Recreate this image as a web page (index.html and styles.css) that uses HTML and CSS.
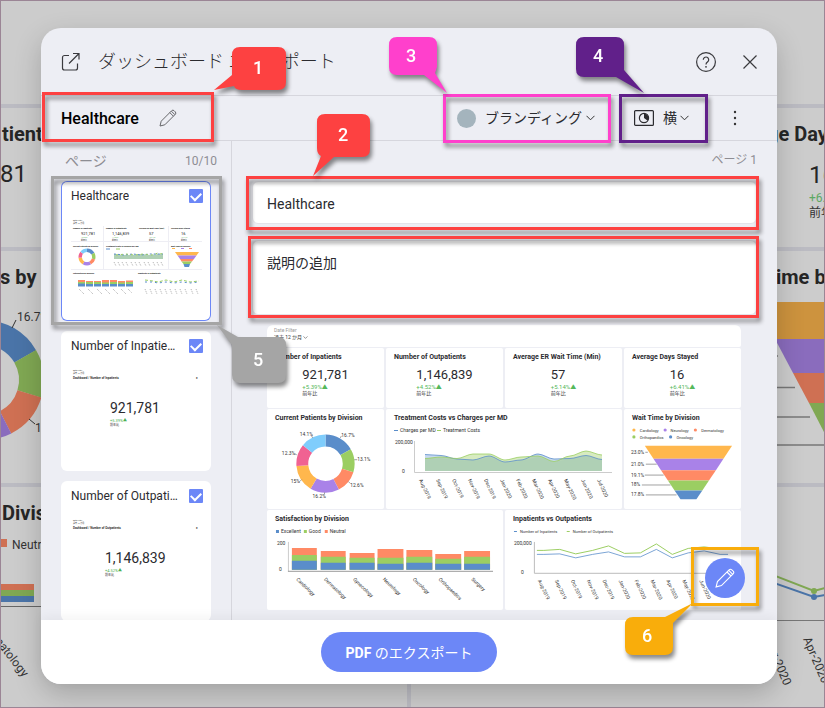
FILE: index.html
```html
<!DOCTYPE html>
<html lang="ja">
<head>
<meta charset="utf-8">
<meta name="viewport" content="width=device-width, initial-scale=1">
<title>ダッシュボード エクスポート</title>
<link rel="stylesheet" href="styles.css">
</head>
<body>
<svg class="backdrop" viewBox="0 0 825 708" preserveAspectRatio="xMidYMid slice" aria-hidden="true">
  <g fill="#bbbbc2">
    <rect y="104" width="825" height="4"/><rect y="247" width="825" height="4"/><rect y="483" width="825" height="4"/><rect x="407" y="487" width="4" height="221"/>
  </g>
  <g class="bg-title">
    <text x="2" y="141">tients</text><text x="0" y="284">s by</text><text x="2" y="520">Division</text>
    <text x="767" y="141">ge Day</text><text x="776" y="284">ime by</text>
  </g>
  <g class="bg-number"><text x="0" y="182">81</text><text x="809" y="183">16</text></g>
  <g fill="none" stroke-width="25">
    <circle cx="-16" cy="380" r="47.5" stroke="#4a74a8" pathLength="100" stroke-dasharray="16.7 100" transform="rotate(-90 -16 380)"/>
    <circle cx="-16" cy="380" r="47.5" stroke="#80a853" pathLength="100" stroke-dasharray="13.1 100" transform="rotate(-30 -16 380)"/>
    <circle cx="-16" cy="380" r="47.5" stroke="#cf7053" pathLength="100" stroke-dasharray="12.8 100" transform="rotate(17 -16 380)"/>
    <circle cx="-16" cy="380" r="47.5" stroke="#8a6cbd" pathLength="100" stroke-dasharray="16.2 100" transform="rotate(63 -16 380)"/>
  </g>
  <path d="M12 328l4-8M29 419l6 5" stroke="#333" fill="none"/>
  <g class="bg-label"><text x="17" y="321">16.7%</text><text x="35" y="432">12.6%</text><text x="12" y="549">Neutral</text>
    <text transform="translate(-19 624) rotate(52)">Dermatology</text>
    <text transform="translate(764 639) rotate(67)">Mar-2020</text><text transform="translate(803 639) rotate(67)">Apr-2020</text></g>
  <path fill="#cf7053" d="M0 539h7v8H0zM0 584h34v6H0z"/><path fill="#80a853" d="M0 590h34v6H0z"/><path fill="#4a74a8" d="M0 596h34v6H0z"/>
  <path d="M0 606.5h41" stroke="#666"/>
  <text class="bg-delta" x="809" y="202">+6.41%</text><text class="bg-label" x="809" y="217">前年比</text>
  <path fill="#cd933e" d="M757 302h68v37h-50z"/><path fill="#8a6cbd" d="M775 339h50v34h-32z"/><path fill="#cf7053" d="M793 373h32v30h-16z"/><path fill="#80a853" d="M809 403h16v31z"/>
  <path d="M770 356h8M770 387.500h25M770 417h40M770 445h55" stroke="#777" stroke-width="1.500"/>
  <path d="M760 570l54 21 11-3" stroke="#80a853" fill="none" stroke-width="2"/><path d="M760 578l54 19 11-2" stroke="#4a74a8" fill="none" stroke-width="2"/>
  <circle cx="814" cy="591" r="3" fill="#80a853"/><circle cx="814" cy="597" r="3" fill="#4a74a8"/>
  <path d="M770 620.500h55" stroke="#777"/>
</svg>

<div class="modal" role="dialog" aria-labelledby="dialog-title">
  <header class="modal-header">
    <svg class="icon-export" viewBox="0 0 20 20" aria-hidden="true"><path d="M8 3.500H3.500a2 2 0 0 0-2 2V16a2 2 0 0 0 2 2h11a2 2 0 0 0 2-2v-4.500M8 11.500L17.500 2M12 1.500h6v6"/></svg>
    <h1 id="dialog-title">ダッシュボード エクスポート</h1>
    <button class="icon-button" type="button" aria-label="ヘルプ"><svg class="icon-help" viewBox="0 0 20 20"><circle cx="10" cy="10" r="9.400"/><path d="M7.300 7.800a2.700 2.700 0 1 1 4.400 2c-1 .8-1.700 1.200-1.700 2.600"/><circle class="dot" cx="10" cy="14.800" r=".9"/></svg></button>
    <button class="icon-button" type="button" aria-label="閉じる"><svg class="icon-close" viewBox="0 0 14 14"><path d="M.5.5l13 13M13.500.5l-13 13"/></svg></button>
  </header>

  <div class="toolbar">
    <div class="doc-name">
      <h2>Healthcare</h2>
      <button class="icon-button" type="button" aria-label="名前の編集"><svg class="icon-pencil" viewBox="0 0 18 18"><path d="M1 17l1.200-4.800L12.700 1.700a1.700 1.700 0 0 1 2.400 0l1.200 1.200a1.700 1.700 0 0 1 0 2.400L5.800 15.800zM10.800 3.600l3.600 3.600M12.400 2.200l3.500 3.500"/></svg></button>
      <span class="frame frame-name"></span>
      <svg class="bubble bubble-1" viewBox="0 0 72 44"><path d="M26 0h38q8 0 8 8v27q0 8-8 8H28q-7 0-8-4L0 43l18-15V8q0-8 8-8z"/><text x="44" y="27">1</text></svg>
    </div>
    <label class="picker picker-branding">
      <span class="swatch"></span>
      <select aria-label="ブランディング"><option>ブランディング</option></select>
      <svg class="chevron" viewBox="0 0 9 6"><path d="M.5.8l4 4 4-4"/></svg>
      <span class="frame frame-branding"></span>
      <svg class="bubble bubble-3" viewBox="0 0 58 56"><path d="M8 0h32q8 0 8 8v22l-2 6 12 20-23-18H8q-8 0-8-8V8q0-8 8-8z"/><text x="22" y="25">3</text></svg>
    </label>
    <label class="picker picker-layout">
      <svg class="icon-layout" viewBox="0 0 20 16"><rect x=".6" y=".6" width="18.800" height="14.800" rx="1"/><circle cx="10" cy="8" r="4.600"/><path class="solid" d="M10 8V3.400A4.600 4.600 0 0 1 13.700 10.700z"/></svg>
      <select aria-label="向き"><option>横</option></select>
      <svg class="chevron" viewBox="0 0 9 6"><path d="M.5.8l4 4 4-4"/></svg>
      <span class="frame frame-layout"></span>
      <svg class="bubble bubble-4" viewBox="0 0 68 56"><path d="M8 0h32q8 0 8 8v25l20 23-28-16H8q-8 0-8-8V8q0-8 8-8z"/><text x="22" y="25">4</text></svg>
    </label>
    <button class="icon-button kebab" type="button" aria-label="その他"><svg viewBox="0 0 4 16"><circle cx="2" cy="2" r="1.200"/><circle cx="2" cy="8" r="1.200"/><circle cx="2" cy="14" r="1.200"/></svg></button>
  </div>

  <div class="modal-body">
    <aside class="sidebar">
      <div class="sidebar-head"><span>ページ</span><span>10/10</span></div>
      <div class="thumb-list">
        <section class="thumb selected">
          <div class="thumb-head"><label for="page-1">Healthcare</label><input id="page-1" type="checkbox" checked></div>
          <svg viewBox="0 0 150 110" aria-hidden="true">
            <g class="micro"><text x="12" y="10">Date Filter</text><text x="12" y="12.500">過去 12 か月</text></g>
            <g class="micro strong"><text x="12" y="18">Number of Inpatients</text><text x="45" y="18">Number of Outpatients</text><text x="78" y="18">Average ER Wait Time (Min)</text><text x="110" y="18">Average Days Stayed</text>
              <text x="12" y="35.500">Current Patients by Division</text><text x="45" y="35.500">Treatment Costs vs Charges per MD</text><text x="110" y="35.500">Wait Time by Division</text><text x="12" y="63">Satisfaction by Division</text><text x="77" y="63">Inpatients vs Outpatients</text></g>
            <g class="micro-number"><text x="20" y="24">921,781</text><text x="51" y="24">1,146,839</text><text x="88" y="24">57</text><text x="120" y="24">16</text></g>
            <g class="micro green"><text x="20" y="27">+5.39%</text><text x="51" y="27">+4.52%</text><text x="88" y="27">+5.14%</text><text x="120" y="27">+6.41%</text></g>
            <g class="micro"><text x="20" y="29.500">前年比</text><text x="51" y="29.500">前年比</text><text x="88" y="29.500">前年比</text><text x="120" y="29.500">前年比</text></g>
            <path d="M10 30.500h131M10 58.500h131M42.500 15v43M107.500 15v43" stroke="#eeeef4" fill="none"/>
            <g fill="none" stroke-width="3.400" transform="rotate(-90 26 46)">
              <circle cx="26" cy="46" r="6.800" stroke="#5a8dca" pathLength="100" stroke-dasharray="16.7 100"/><circle cx="26" cy="46" r="6.800" stroke="#9bce62" pathLength="100" stroke-dasharray="13.1 100" stroke-dashoffset="-16.7"/><circle cx="26" cy="46" r="6.800" stroke="#ff8a65" pathLength="100" stroke-dasharray="12.6 100" stroke-dashoffset="-29.8"/><circle cx="26" cy="46" r="6.800" stroke="#a982e8" pathLength="100" stroke-dasharray="16.2 100" stroke-dashoffset="-42.4"/><circle cx="26" cy="46" r="6.800" stroke="#ffb74d" pathLength="100" stroke-dasharray="15 100" stroke-dashoffset="-58.6"/><circle cx="26" cy="46" r="6.800" stroke="#f06292" pathLength="100" stroke-dasharray="12.3 100" stroke-dashoffset="-73.6"/><circle cx="26" cy="46" r="6.800" stroke="#7fcdfc" pathLength="100" stroke-dasharray="14.1 100" stroke-dashoffset="-85.9"/>
            </g>
            <path fill="#afd0b5" d="M53 48v-5l10 1 9 0 8-1 9 1 8-1 5 0v5z"/><path d="M53 43l10 1 9-1 8 1 9-1 8 0 5 0" stroke="#5a8dca" stroke-dasharray="2 2" fill="none"/><path d="M55 44l10-1 9 1 8-1 9 1 6-2 5 1" stroke="#9bce62" stroke-dasharray="2 3" fill="none"/>
            <path d="M45 38h4" stroke="#5a8dca"/><path d="M55 38h4" stroke="#9bce62"/>
            <path class="ticks" d="M53 51l2 4M57 51l2 4M61 51l2 4M65 51l2 4M70 51l2 4M74 51l2 4M78 51l2 4M83 51l2 4M87 51l2 4M92 51l2 4M96 51l2 4M100 51l2 4M18 78l5 5M27 78l5 5M36 78l5 5M44 78l5 5M52 78l5 5M60 78l5 5M67 78l4 4M84 78l2 5M89 78l2 5M94 78l2 5M99 78l2 5M104 78l2 5M109 78l2 5M114 78l2 5M119 78l2 5M124 78l2 5M130 78l2 5M135 78l2 5"/>
            <path fill="#ffb74d" d="M114 41h24l-2.500 3.500h-19z"/><path fill="#a982e8" d="M116.500 44.500h19l-2.500 3.500h-14z"/><path fill="#ff8a65" d="M119 48h14l-2 2.500h-10.500z"/><path fill="#9bce62" d="M120.500 50.500h10.500l-2 2.500h-6.500z"/><path fill="#5a8dca" d="M122.500 53h6.500l-1 3h-4.500z"/>
            <path d="M111 37.500h3" stroke="#ffb74d"/><path d="M120 37.500h3" stroke="#a982e8"/><path d="M128 37.500h3" stroke="#ff8a65"/>
            <path fill="#ff8a65" d="M17 69h7v3h-7zM25 70h7v2h-7zM33 70h7v2h-7zM41 69h7v3h-7zM49 69h7v3h-7zM57 70h7v2h-7zM65 69.500h7v2.500h-7z"/><path fill="#9bce62" d="M17 71h7v2h-7zM25 71h7v2h-7zM33 71h7v2h-7zM41 71.500h7v2h-7zM49 71h7v2h-7zM57 71.500h7v2h-7zM65 71h7v2h-7z"/><path fill="#5a8dca" d="M17 72.500h7v3h-7zM25 73h7v2.500h-7zM33 73h7v2.500h-7zM41 73h7v2.500h-7zM49 73h7v2.500h-7zM57 73h7v2.500h-7zM65 73h7v2.500h-7z"/>
            <path d="M84 69l8 1 5 1 8-2 8 2 8-2 8 2 9-1" stroke="#9bce62" stroke-dasharray="3 2" fill="none"/><path d="M84 71l8 0 5 1 8-1 8 1 8-1 8 1 9-1" stroke="#5a8dca" stroke-dasharray="2 3" fill="none"/>
          </svg>
          <span class="frame frame-thumb"></span>
          <svg class="bubble bubble-5" viewBox="0 0 70 58"><path d="M1 0l21 12h40q8 0 8 8v30q0 8-8 8H24q-8 0-8-8V20z"/><text x="42" y="41">5</text></svg>
        </section>
        <section class="thumb">
          <div class="thumb-head"><label for="page-2">Number of Inpatients</label><input id="page-2" type="checkbox" checked></div>
          <svg viewBox="0 0 150 110" aria-hidden="true">
            <g class="micro"><text x="12" y="10">Date Filter</text><text x="12" y="12.500">過去 12 か月</text></g>
            <text class="micro-title" x="12" y="18">Dashboard / Number of Inpatients</text><text class="micro-title" x="135" y="18">x</text>
            <text class="thumb-number" x="49" y="52">921,781</text><text class="thumb-delta" x="49" y="61">+5.39%▲</text><text class="thumb-note" x="49" y="65">前年比</text>
          </svg>
        </section>
        <section class="thumb">
          <div class="thumb-head"><label for="page-3">Number of Outpatients</label><input id="page-3" type="checkbox" checked></div>
          <svg viewBox="0 0 150 110" aria-hidden="true">
            <g class="micro"><text x="12" y="10">Date Filter</text><text x="12" y="12.500">過去 12 か月</text></g>
            <text class="micro-title" x="12" y="18">Dashboard / Number of Outpatients</text><text class="micro-title" x="135" y="18">x</text>
            <text class="thumb-number" x="44" y="52">1,146,839</text><text class="thumb-delta" x="44" y="61">+4.52%▲</text><text class="thumb-note" x="44" y="65">前年比</text>
          </svg>
        </section>
      </div>
    </aside>

    <main class="page">
      <div class="page-number">ページ 1</div>
      <div class="field field-title">
        <input type="text" value="Healthcare" aria-label="タイトル">
        <span class="frame frame-title"></span>
        <svg class="bubble bubble-2" viewBox="0 0 58 62"><path d="M11 0h38q8 0 8 8v27q0 8-8 8h-28L0 62l8-20q-4-2-4-8V8q0-8 8-8z"/><text x="30" y="27">2</text></svg>
      </div>
      <div class="field field-notes">
        <textarea aria-label="説明">説明の追加</textarea>
        <span class="frame frame-notes"></span>
      </div>

      <div class="dashboard">
        <section class="card filter"><span>Date Filter</span><strong>過去 12 か月 <svg viewBox="0 0 9 6"><path d="M.5.8l4 4 4-4"/></svg></strong></section>
        <section class="card kpi"><h3>Number of Inpatients</h3><div><b>921,781</b><em>+5.39%▲</em><span>前年比</span></div></section>
        <section class="card kpi"><h3>Number of Outpatients</h3><div><b>1,146,839</b><em>+4.52%▲</em><span>前年比</span></div></section>
        <section class="card kpi"><h3>Average ER Wait Time (Min)</h3><div><b>57</b><em>+5.14%▲</em><span>前年比</span></div></section>
        <section class="card kpi"><h3>Average Days Stayed</h3><div><b>16</b><em>+6.41%▲</em><span>前年比</span></div></section>

        <section class="card"><h3>Current Patients by Division</h3>
          <svg viewBox="0 18 118 82">
            <g fill="none" stroke-width="12" transform="rotate(-90 59 55)">
              <circle cx="59" cy="55" r="23.400" stroke="#5a8dca" pathLength="100" stroke-dasharray="16.7 100"/><circle cx="59" cy="55" r="23.400" stroke="#9bce62" pathLength="100" stroke-dasharray="13.1 100" stroke-dashoffset="-16.7"/><circle cx="59" cy="55" r="23.400" stroke="#ff8a65" pathLength="100" stroke-dasharray="12.6 100" stroke-dashoffset="-29.8"/><circle cx="59" cy="55" r="23.400" stroke="#a982e8" pathLength="100" stroke-dasharray="16.2 100" stroke-dashoffset="-42.4"/><circle cx="59" cy="55" r="23.400" stroke="#ffb74d" pathLength="100" stroke-dasharray="15 100" stroke-dashoffset="-58.6"/><circle cx="59" cy="55" r="23.400" stroke="#f06292" pathLength="100" stroke-dasharray="12.3 100" stroke-dashoffset="-73.6"/><circle cx="59" cy="55" r="23.400" stroke="#7fcdfc" pathLength="100" stroke-dasharray="14.1 100" stroke-dashoffset="-85.9"/>
            </g>
            <path class="leader" d="M74 29l1-2M88 51h3M82 73l2 2M58 84v2M35 71l-2 2M30 46l-2-1M46 29l-1-2"/>
            <g class="tiny"><text x="75" y="28">16.7%</text><text x="91" y="52">13.1%</text><text x="84" y="79">12.6%</text><text x="46" y="90">16.2%</text><text x="24" y="75">15%</text><text x="15" y="46">12.3%</text><text x="33" y="27">14.1%</text></g>
          </svg>
        </section>
        <section class="card wide-mid"><h3>Treatment Costs vs Charges per MD</h3>
          <svg viewBox="0 18 236 82">
            <path d="M8 21.500h4" stroke="#5a8dca"/><path d="M51 21.500h4" stroke="#9bce62"/>
            <g class="tiny"><text x="14" y="23">Charges per MD</text><text x="57" y="23">Treatment Costs</text><text x="9" y="35">200,000</text><text x="16" y="64">0</text></g>
            <path d="M28.500 32v31.500H226" stroke="#ccc" fill="none"/>
            <path fill="#c6d9ef" d="M39 62V45.500S50 46.500 55 46.500 66 50 71 50 82 51 87 51 98 47 103 47 114 53 119 53 130 51 135 51 147 45 152 45 163 50 168 50 179 49.500 184 49.500 195 46.500 200 46.500 211 50.500 216 50.500V62z"/>
            <path fill="#9bce62" fill-opacity=".4" d="M39 62V49.500S50 48 55 48 66 49.500 71 49.500 82 45 87 45 98 45 103 45 114 51 119 51 130 48 135 48 147 47 152 47 163 52.500 168 52.500 179 47 184 47 195 42 200 42 211 46 216 46V62z"/>
            <path fill="#afd0b5" d="M39 62V50L55 49l16 2 16 1 16-4 16 6 16-2 17-4 16 5 16-3 16-3 16 4v11z"/>
            <path fill="none" stroke="#5a8dca" stroke-width=".8" d="M39 45.500C44 45.500 50 46.500 55 46.500S66 50 71 50 82 51 87 51 98 47 103 47 114 53 119 53 130 51 135 51 147 45 152 45 163 50 168 50 179 49.500 184 49.500 195 46.500 200 46.500 211 50.500 216 50.500"/>
            <path fill="none" stroke="#9bce62" stroke-width=".8" d="M39 49.500C44 49.500 50 48 55 48S66 49.500 71 49.500 82 45 87 45 98 45 103 45 114 51 119 51 130 48 135 48 147 47 152 47 163 52.500 168 52.500 179 47 184 47 195 42 200 42 211 46 216 46"/>
            <g class="tiny"><text transform="translate(33 71) rotate(65)">Aug-2019</text><text transform="translate(50 71) rotate(65)">Sep-2019</text><text transform="translate(66 71) rotate(65)">Oct-2019</text><text transform="translate(82 71) rotate(65)">Nov-2019</text><text transform="translate(98 71) rotate(65)">Dec-2019</text><text transform="translate(114 71) rotate(65)">Jan-2020</text><text transform="translate(130 71) rotate(65)">Feb-2020</text><text transform="translate(146 71) rotate(65)">Mar-2020</text><text transform="translate(162 71) rotate(65)">Apr-2020</text><text transform="translate(178 71) rotate(65)">May-2020</text><text transform="translate(195 71) rotate(65)">Jun-2020</text><text transform="translate(211 71) rotate(65)">Jul-2020</text></g>
          </svg>
        </section>
        <section class="card"><h3>Wait Time by Division</h3>
          <svg viewBox="0 18 118 82">
            <circle cx="10" cy="21" r="1.600" fill="#ffb74d"/><circle cx="41.500" cy="21" r="1.600" fill="#a982e8"/><circle cx="72" cy="21" r="1.600" fill="#ff8a65"/><circle cx="10" cy="28" r="1.600" fill="#9bce62"/><circle cx="47" cy="28" r="1.600" fill="#5a8dca"/>
            <g class="tiny legend"><text x="16" y="23">Cardiology</text><text x="47" y="23">Neurology</text><text x="78" y="23">Dermatology</text><text x="16" y="30">Orthopaedics</text><text x="53" y="30">Oncology</text></g>
            <g class="tiny"><text x="7" y="45">23.0%</text><text x="7" y="57">21.0%</text><text x="7" y="68">19.1%</text><text x="7" y="78">18%</text><text x="7" y="88">17.8%</text></g>
            <path class="leader" d="M21.500 43.500H24M22 55.500h11M21 66.500h19M18 76.500h29M22 86.500h31"/>
            <path fill="#ffb74d" d="M21 37h88l-8.700 13H29.700z"/><path fill="#a982e8" d="M29.700 50h70.600l-7.600 11.500H37.300z"/><path fill="#ff8a65" d="M37.300 61.500h55.400l-7 10.500H44.300z"/><path fill="#9bce62" d="M44.300 72h41.400L79 82H51z"/><path fill="#5a8dca" d="M51 82h28l-6 9H57z"/>
          </svg>
        </section>

        <section class="card half"><h3>Satisfaction by Division</h3>
          <svg viewBox="0 18 237 82">
            <path fill="#5a8dca" d="M9 20h3v3H9z"/><path fill="#9bce62" d="M37 20h3v3h-3z"/><path fill="#ff8a65" d="M58 20h3v3h-3z"/>
            <g class="tiny"><text x="14" y="23">Excellent</text><text x="42" y="23">Good</text><text x="63" y="23">Neutral</text><text x="10" y="35">200</text><text x="12" y="61">0</text></g>
            <path d="M21.500 32v29.500" stroke="#ccc"/><path d="M21 61.500h206" stroke="#999"/>
            <path fill="#ff8a65" d="M25 38h25v22H25zM54 41h25v19H54zM83 43h25v17H83zM111 39h26v21h-26zM140 40h26v20h-26zM169 44h26v16h-26zM198 41h26v19h-26z"/>
            <path fill="#9bce62" d="M25 45h25v15H25zM54 47h25v13H54zM83 48h25v12H83zM111 48h26v12h-26zM140 47h26v13h-26zM169 49h26v11h-26zM198 47h26v13h-26z"/>
            <path fill="#5a8dca" d="M25 51h25v9H25zM54 53h25v7H54zM83 53h25v7H83zM111 54h26v6h-26zM140 53h26v7h-26zM169 54h26v6h-26zM198 54h26v6h-26z"/>
            <g class="tiny"><text transform="translate(29 70) rotate(44)">Cardiology</text><text transform="translate(57 70) rotate(44)">Dermatology</text><text transform="translate(86 70) rotate(44)">Gynecology</text><text transform="translate(116 70) rotate(44)">Neurology</text><text transform="translate(146 70) rotate(44)">Oncology</text><text transform="translate(172 70) rotate(44)">Orthopaedics</text><text transform="translate(205 70) rotate(44)">Surgery</text></g>
          </svg>
        </section>
        <section class="card half"><h3>Inpatients vs Outpatients</h3>
          <svg viewBox="0 18 237 82">
            <path d="M9 21.500h3" stroke="#5a8dca"/><path d="M62 21.500h3" stroke="#9bce62"/>
            <g class="tiny legend"><text x="15" y="23">Number of Inpatients</text><text x="68" y="23">Number of Outpatients</text></g>
            <g class="tiny"><text x="9" y="35">200,000</text><text x="16" y="64">0</text></g>
            <path d="M29.500 32v31.500H226" stroke="#bbb" fill="none"/>
            <path fill="none" stroke="#9bce62" d="M32 40.500h7l16-1 16 4.500 17-3.500 16-4.500 16 7.500 16-.5 16-9 16 10.500 16-6 16-1.500 16 2h8"/>
            <path fill="none" stroke="#5a8dca" stroke-width=".8" d="M32 44.500h7l16-.5 16 4 17-3.500 16-2.500 16 5h16l16-7.500 16 8.500 16-5 16-2 16 3.500h8"/>
            <g class="tiny"><text transform="translate(33 71) rotate(65)">Aug-2019</text><text transform="translate(50 71) rotate(65)">Sep-2019</text><text transform="translate(66 71) rotate(65)">Oct-2019</text><text transform="translate(82 71) rotate(65)">Nov-2019</text><text transform="translate(98 71) rotate(65)">Dec-2019</text><text transform="translate(114 71) rotate(65)">Jan-2020</text><text transform="translate(130 71) rotate(65)">Feb-2020</text><text transform="translate(146 71) rotate(65)">Mar-2020</text><text transform="translate(162 71) rotate(65)">Apr-2020</text><text transform="translate(178 71) rotate(65)">May-2020</text><text transform="translate(195 71) rotate(65)">Jun-2020</text></g>
          </svg>
        </section>
      </div>

      <div class="edit-spot">
        <button class="fab" type="button" aria-label="編集"><svg class="icon-pencil" viewBox="0 0 18 18"><path d="M1 17l1.200-4.800L12.700 1.700a1.700 1.700 0 0 1 2.400 0l1.200 1.200a1.700 1.700 0 0 1 0 2.400L5.800 15.800zM10.800 3.600l3.600 3.600M12.400 2.200l3.500 3.500"/></svg></button>
        <span class="frame frame-edit"></span>
        <svg class="bubble bubble-6" viewBox="0 0 68 52"><path d="M68 0L48 20v24q0 8-8 8H8q-8 0-8-8V22q0-8 8-8h32z"/><text x="22" y="39">6</text></svg>
      </div>
    </main>
  </div>

  <footer class="modal-footer"><button class="primary" type="button"><b>PDF</b> のエクスポート</button></footer>
</div>
</body>
</html>
```
FILE: styles.css
```css
* { box-sizing: border-box; }

:root {
  --red: #fd4141;
  --pink: #ff40cc;
  --purple: #61208a;
  --gray: #a5a5a5;
  --amber: #f9ad0b;
  --blue: #6c87f7;
  --line: #d6d6dd;
  --surface: #edeef4;
}

body {
  margin: 0;
  height: 100vh;
  overflow: hidden;
  position: relative;
  display: flex;
  padding: 28px 48px 24px 41px;
  background: #ccc;
  color: #2b2b2f;
  font-family: Roboto, "Noto Sans CJK JP", sans-serif;
}
body::after {
  content: "";
  position: absolute;
  inset: 0;
  border: 1px solid #9b8595;
}

button, input, textarea, select { font: inherit; color: inherit; }
h1, h2, h3 { margin: 0; }

.backdrop { position: absolute; inset: 0; width: 100%; height: 100%; }
.bg-title { font-size: 20px; font-weight: 700; fill: #262626; }
.bg-number { font-size: 24px; fill: #262626; }
.bg-label { font-size: 12px; fill: #333; }
.bg-delta { font-size: 12px; fill: #5da864; }

.modal {
  position: relative;
  z-index: 1;
  flex: 1;
  min-width: 0;
  display: flex;
  flex-direction: column;
  border-radius: 20px;
  background: var(--surface);
  box-shadow: 0 10px 28px rgba(0, 0, 0, .2);
}

.icon-button { display: flex; padding: 0; border: 0; background: none; }
.icon-button svg, .icon-export { fill: none; stroke: #3a3a3e; stroke-width: 1.2; }

.modal-header {
  display: flex;
  align-items: center;
  gap: 27px;
  height: 68px;
  padding: 0 20px;
  border-bottom: 1px solid var(--line);
}
.modal-header h1 {
  flex: 1;
  margin-left: -10px;
  font-size: 18px;
  font-weight: 300;
  line-height: 28px;
}
.icon-export { width: 20px; height: 20px; }
.icon-help { width: 20px; height: 20px; }
.icon-help .dot { fill: #3a3a3e; stroke: none; }
.icon-close { width: 14px; height: 14px; }

.toolbar {
  display: flex;
  align-items: stretch;
  gap: 8px;
  height: 45px;
  padding-right: 40px;
  border-bottom: 1px solid var(--line);
}
.doc-name {
  position: relative;
  display: flex;
  align-items: center;
  gap: 20px;
  width: 173px;
  margin-right: auto;
  padding-left: 20px;
}
.doc-name h2 { color: #000; font-size: 16px; font-weight: 500; }
.icon-pencil { width: 18px; height: 18px; }
.doc-name .icon-pencil { stroke: #66666a; stroke-width: 1; }
.picker { position: relative; display: flex; align-items: center; font-size: 14px; }
.picker select { appearance: none; padding: 0; border: 0; background: none; line-height: 20px; }
.picker-branding { padding: 0 16px 0 14px; }
.picker-layout { padding: 0 19px 0 15px; }
.swatch { width: 19px; height: 19px; margin-right: 9px; border-radius: 50%; background: #a4b4bd; }
.chevron { width: 9px; height: 6px; margin-left: 3px; fill: none; stroke: #333; }
.icon-layout { width: 20px; height: 16px; margin-right: 9px; fill: none; stroke: #2b2b2f; stroke-width: 1.2; }
.icon-layout .solid { fill: #2b2b2f; stroke: none; }
.kebab { align-items: center; width: 21px; justify-content: flex-end; }
.kebab svg { width: 4px; height: 16px; fill: #333; stroke: none; }

.modal-body { flex: 1; min-height: 0; display: flex; }
.sidebar { width: 191px; border-right: 1px solid var(--line); }
.sidebar-head {
  display: flex;
  justify-content: space-between;
  padding: 10px 14px 10px 24px;
  color: #8d8d93;
  font-size: 14px;
  line-height: 20px;
}
.sidebar-head span:last-child { font-size: 12px; }
.thumb-list { display: flex; flex-direction: column; gap: 10px; padding: 0 20px; }
.thumb { position: relative; height: 140px; border-radius: 6px; background: #fff; }
.thumb.selected { box-shadow: inset 0 0 0 1px var(--blue); }
.thumb > svg:not(.bubble) { display: block; width: 100%; }
.thumb-head {
  display: flex;
  align-items: center;
  justify-content: space-between;
  gap: 8px;
  height: 30px;
  padding: 0 8px 0 10px;
  font-size: 12px;
}
.thumb-head label { overflow: hidden; max-width: 108px; text-overflow: ellipsis; white-space: nowrap; }
.thumb-head input {
  appearance: none;
  display: grid;
  place-items: center;
  flex: none;
  width: 14px;
  height: 14px;
  margin: 0;
  border-radius: 1px;
  background: var(--blue);
}
.thumb-head input:checked::after {
  content: "";
  width: 8px;
  height: 5px;
  margin-bottom: 2px;
  border: solid #fff;
  border-width: 0 0 2px 2px;
  transform: rotate(-45deg);
}
.micro { font-size: 2px; fill: #333; }
.strong { font-weight: 700; fill: #000; }
.green { fill: #5cb860; }
.micro-number { font-size: 4px; fill: #222; }
.micro-title { font-size: 3px; font-weight: 700; fill: #333; }
.ticks { fill: none; stroke: #777; stroke-width: .6; stroke-dasharray: 1 1; }
.thumb-number { font-size: 14px; fill: #2b2b2f; }
.thumb-delta { font-size: 4px; fill: #4cb050; }
.thumb-note { font-size: 3px; fill: #222; }

.page { position: relative; flex: 1; min-width: 0; padding: 0 20px; }
.page-number { padding: 9px 0 11px; color: #8d8d93; font-size: 12px; line-height: 20px; text-align: right; }
.field { position: relative; }
.field input, .field textarea {
  display: block;
  width: 100%;
  border: 1px solid #e4e4ea;
  border-radius: 6px;
  background: #fff;
  padding: 0 14px;
  font-size: 14px;
  resize: none;
  outline: 0;
}
.field input { height: 43px; padding-top: 3px; }
.field textarea { height: 75px; padding-top: 12px; line-height: 20px; }
.field-title { margin-bottom: 16px; }
.field-notes { margin-bottom: 10px; }

.dashboard {
  display: grid;
  grid-template-columns: repeat(4, minmax(0, 1fr));
  gap: 1px 2px;
  margin: 0 16px 0 15px;
}
.card { overflow: hidden; border-radius: 2px; background: #fff; }
.card h3 { padding-left: 8px; font-size: 7px; font-weight: 700; line-height: 18px; white-space: nowrap; }
.card > svg { display: block; width: 100%; }
.wide-mid, .half { grid-column: span 2; }
.filter {
  grid-column: 1 / -1;
  display: flex;
  flex-direction: column;
  height: 22px;
  padding: 2px 7px;
  border-radius: 6px 6px 2px 2px;
  color: #999;
  font-size: 5px;
  line-height: 7px;
}
.filter strong { color: #333; font-weight: 400; }
.filter svg { width: 5px; height: 3px; fill: none; stroke: #333; }
.kpi { height: 60px; }
.kpi div { display: flex; flex-direction: column; width: max-content; margin: 0 auto; font-size: 5px; line-height: 7px; }
.kpi b { font-size: 13px; font-weight: 400; line-height: 17px; }
.kpi em { color: #55b85a; font-size: 6px; font-style: normal; }
.tiny { font-size: 5px; fill: #333; }
.legend { font-size: 4px; }
.leader { fill: none; stroke: #777; stroke-width: .7; }

.edit-spot { position: absolute; right: 32px; bottom: 22px; }
.fab {
  display: grid;
  place-items: center;
  width: 40px;
  height: 40px;
  padding: 0;
  border: 0;
  border-radius: 50%;
  background: var(--blue);
}
.fab svg { width: 20px; height: 20px; fill: none; stroke: #fff; }

.modal-footer {
  position: relative;
  z-index: 1;
  display: flex;
  align-items: center;
  justify-content: center;
  height: 64px;
  border-radius: 0 0 20px 20px;
  background: #fff;
  box-shadow: 0 -3px 12px rgba(0, 0, 0, .05);
}
.primary {
  height: 40px;
  padding: 0 25px;
  border: 0;
  border-radius: 20px;
  background: var(--blue);
  color: #fff;
  font-size: 14px;
}
.primary b { font-weight: 700; }

.frame, .bubble {
  position: absolute;
  z-index: 2;
  pointer-events: none;
  filter: drop-shadow(2px 4px 2px rgba(0, 0, 0, .45));
}
.frame { border: 3px solid var(--red); }
.frame-name { inset: -4px 0 -2px 1px; }
.frame-branding { inset: -2px 0 -3px; border-color: var(--pink); }
.frame-layout { inset: -2px 0 -3px; border-color: var(--purple); }
.frame-thumb { inset: -5px -11px -4px -10px; border-color: var(--gray); }
.frame-title { inset: -5px -2px -6px -6px; }
.frame-notes { inset: -4px -2px -3px -4px; }
.frame-edit { inset: -11px -14px -8px; border-color: var(--amber); }

.bubble { z-index: 3; fill: var(--red); }
.bubble text { fill: #fff; font-size: 18px; font-weight: 500; text-anchor: middle; }
.bubble-1 { left: 173px; top: -49px; width: 72px; height: 44px; }
.bubble-2 { left: 61px; top: -67px; width: 58px; height: 62px; }
.bubble-3 { left: -54px; top: -59px; width: 58px; height: 56px; fill: var(--pink); }
.bubble-4 { left: -43px; top: -59px; width: 68px; height: 56px; fill: var(--purple); }
.bubble-5 { left: 155px; top: 144px; width: 70px; height: 58px; fill: var(--gray); }
.bubble-6 { right: 52px; top: 45px; width: 68px; height: 52px; fill: var(--amber); }
```
